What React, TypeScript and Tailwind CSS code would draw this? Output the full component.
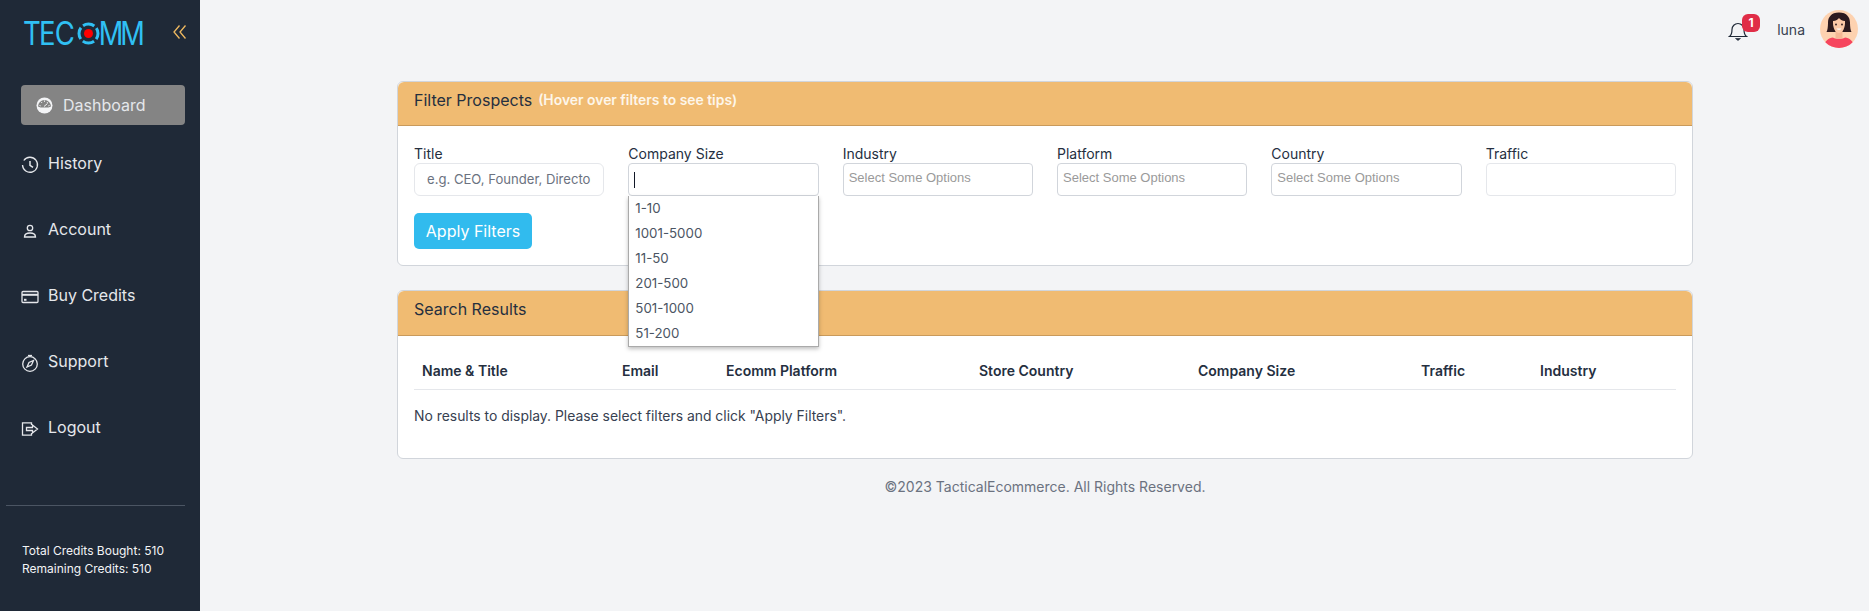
import React from "react";

const font = { fontFamily: "Inter, sans-serif" };

function Logo() {
  return (
    <svg width="124" height="40" viewBox="0 0 124 40" className="block">
      <g fill="#30c0f4" fontFamily="Inter, sans-serif" fontSize="32" fontWeight="400">
        <text x="0 18.600 37" y="31" transform="scale(0.86 1)">TEC</text>
        <text x="89 114.500" y="31" transform="scale(0.85 1)">MM</text>
      </g>
      <circle cx="65.500" cy="19.500" r="9.500" fill="none" stroke="#30c0f4" strokeWidth="3" strokeDasharray="12 2.900" strokeDashoffset="6" />
      <circle cx="65.500" cy="19.500" r="4.500" fill="#fe0000" />
    </svg>
  );
}

const I = ({ children }: { children: React.ReactNode }) => (
  <svg width="18" height="18" viewBox="0 0 18 18" fill="none" stroke="currentColor" strokeWidth="1.300">
    {children}
  </svg>
);

const nav: [string, React.ReactNode][] = [
  ["History", <I><path d="M2.800 4.500A7.500 7.500 0 1 1 1.500 9" /><path d="M9 5v4.300l3 2" strokeWidth="1.500" /></I>],
  ["Account", <I><circle cx="9" cy="6" r="2.700" /><path d="M3.500 15c0-3 2.200-4 5.500-4s5.500 1 5.500 4z" /></I>],
  ["Buy Credits", <I><rect x="1" y="3.500" width="16" height="11" rx="1" /><path d="M1 6.800h16" strokeWidth="2" /><path d="M3 11.800h2.500" strokeWidth="2" /></I>],
  ["Support", <I><circle cx="9" cy="10" r="7.300" /><path d="M12.500 6.500l-2 4.600-4.500 2 2-4.600z" /><path d="M7 1.500h4" /></I>],
  ["Logout", <I><path d="M10.500 5V2.800H1.500v12.400h9V13" /><path d="M5.500 7.500h6V5l5 4-5 4v-2.500h-6z" /></I>],
];

const colLabels: [string, string][] = [
  ["Name & Title", "w-[200px]"],
  ["Email", "w-[104px]"],
  ["Ecomm Platform", "w-[253px]"],
  ["Store Country", "w-[219px]"],
  ["Company Size", "w-[223px]"],
  ["Traffic", "w-[119px]"],
  ["Industry", "w-[100px]"],
];

function Multi({ label }: { label: string }) {
  return (
    <div>
      <div className="text-[14px] leading-[17px] text-[#252f3f]">{label}</div>
      <div className="mt-[1px] h-[33px] rounded-[4px] border border-[#d1d5db] bg-white pl-[5px] pt-[5px] text-[13px] leading-[17px] text-[#9a9a9a]" style={{ fontFamily: "'Liberation Sans', sans-serif" }}>
        Select Some Options
      </div>
    </div>
  );
}

export default function App() {
  return (
    <div className="flex h-[611px] w-full overflow-hidden bg-[#f3f4f6]" style={font}>
      <aside className="flex w-[200px] shrink-0 flex-col bg-[#1f2937] text-[#e5e7eb]">
        <div className="flex h-[85px] items-start pl-[23px] pt-[14px]">
          <Logo />
          <svg width="14" height="16" viewBox="0 0 14 16" fill="none" stroke="#efb960" strokeWidth="1.300" className="ml-[26px] mt-[10px]">
            <path d="M6.500 1.500L1 8l5.500 6.500M12.500 1.500L7 8l5.500 6.500" />
          </svg>
        </div>
        <div className="ml-[21px] mr-[15px] flex h-[40px] items-center rounded-[4px] bg-[#848484] pl-[15px] text-[16px] text-[#e5e7eb]">
          <svg width="17" height="17" viewBox="0 0 17 17" className="mr-[10px]">
            <circle cx="8.500" cy="8.500" r="8" fill="#f3f4f6" />
            <path d="M2 9.500a6.500 6.500 0 0 1 13 0l-2.500 1h-8z" fill="#848484" />
            <path d="M3.500 8.500l1.200.4M5.200 5l.8.9M8.500 3.500v1.300M11.800 5l-.8.9M8 9.500l3.500-3M13.500 8.500l-1.200.4" stroke="#f3f4f6" strokeWidth="1" fill="none" />
          </svg>
          Dashboard
        </div>
        <nav className="mt-[7px] flex flex-col">
          {nav.map(([label, icon]) => (
            <div key={label} className="flex h-[66px] items-center pl-[21px] text-[16px] text-[#e5e7eb]">
              <span className="mr-[9px] flex w-[18px] items-center">{icon}</span>
              <span className="-mt-[4px]">{label}</span>
            </div>
          ))}
        </nav>
        <div className="ml-[6px] mr-[15px] mt-[43px] border-t border-[#4b5563]" />
        <div className="mt-[36px] pl-[22px] text-[12px] leading-[18px] text-[#f3f4f6]">
          <div>Total Credits Bought: 510</div>
          <div>Remaining Credits: 510</div>
        </div>
      </aside>

      <main className="relative min-w-0 flex-1">
        <header className="flex h-[81px] items-start justify-end pr-[11px] pt-[10px]">
          <div className="relative mr-[29px] mt-[11px] h-[20px] w-[20px]">
            <svg width="20" height="20" viewBox="0 0 20 20" fill="none" stroke="#1f2937" strokeWidth="1.200">
              <path d="M1.500 15.500c2-1.500 2.500-3.500 2.500-7a6 6 0 0 1 12 0c0 3.500.5 5.500 2.500 7z" />
              <path d="M7.500 17.500h5l-2.500 2z" fill="#1f2937" strokeWidth="0.600" />
            </svg>
            <span className="absolute -right-[12px] -top-[7px] flex h-[18px] w-[18px] items-center justify-center rounded-[6px] bg-[#e02d47] text-[12px] font-bold leading-none text-white">1</span>
          </div>
          <span className="mr-[15px] mt-[11px] text-[14px] leading-[17px] text-[#374151]">luna</span>
          <svg width="38" height="38" viewBox="0 0 38 38">
            <defs>
              <clipPath id="av"><circle cx="19" cy="19" r="19" /></clipPath>
            </defs>
            <g clipPath="url(#av)">
              <rect width="38" height="38" fill="#fdd2b0" />
              <path d="M19 2.500c-8 0-11 5-11 10 0 4-.5 8-1.500 9.500h25c-1-1.500-1.500-5.500-1.500-9.500 0-5-3-10-11-10z" fill="#2d1a1f" />
              <path d="M15.500 20h7v8h-7z" fill="#f4b795" />
              <path d="M4 38c0-7 5-10.500 9-10.500 1 1.800 11 1.800 12 0 4 0 9 3.500 9 10.500z" fill="#f6455e" />
              <path d="M13 11c3 0 5-1.500 6-3 1 1.500 3 3 6 3 .5 7-2.500 12-6 12s-6.500-5-6-12z" fill="#fcc9a8" />
              <circle cx="16" cy="14.500" r="0.900" fill="#2d1a1f" />
              <circle cx="22" cy="14.500" r="0.900" fill="#2d1a1f" />
              <path d="M16.500 18.500h5c-.5 1.800-4.500 1.800-5 0z" fill="#fff" />
            </g>
          </svg>
        </header>

        <div className="ml-[197px] mr-[176px]">
          <section className="rounded-[6px] border border-[#d1d5db] bg-white">
            <div className="flex h-[44px] items-start rounded-t-[6px] border-b border-[#c99a5b] bg-[#f0bb72] px-[16px] pt-[7px] text-[#252f3f]">
              <span className="text-[16px] leading-[22px]">Filter Prospects</span>
              <span className="ml-[6px] text-[13.900px] font-semibold leading-[22px] text-[#fdf6ea]">(Hover over filters to see tips)</span>
            </div>
            <div className="px-[16px] pb-[16px] pt-[19px]">
              <div className="grid grid-cols-6 gap-x-[24px]">
                <div>
                  <div className="text-[14px] leading-[17px] text-[#252f3f]">Title</div>
                  <div className="mt-[1px] h-[33px] rounded-[6px] border border-[#e5e7eb] bg-white px-[12px]">
                    <div className="overflow-hidden whitespace-nowrap text-[13.100px] leading-[31px] text-[#6b7280]">e.g. CEO, Founder, Director</div>
                  </div>
                </div>
                <div className="relative">
                  <div className="text-[14px] leading-[17px] text-[#252f3f]">Company Size</div>
                  <div className="mt-[1px] flex h-[33px] items-center rounded-[4px] border border-[#d1d5db] bg-white pl-[5px]">
                    <span className="h-[16px] w-[1px] bg-[#111827]" />
                  </div>
                  <ul className="absolute left-0 right-0 top-[51px] z-10 border border-t-0 border-[#aaaaaa] bg-white text-[13.300px] text-[#4b5563] shadow-[0_2px_4px_rgba(0,0,0,0.25)]">
                    {["1-10", "1001-5000", "11-50", "201-500", "501-1000", "51-200"].map((o) => (
                      <li key={o} className="flex h-[25px] items-center pl-[6px]">{o}</li>
                    ))}
                  </ul>
                </div>
                <Multi label="Industry" />
                <Multi label="Platform" />
                <Multi label="Country" />
                <div>
                  <div className="text-[14px] leading-[17px] text-[#252f3f]">Traffic</div>
                  <div className="mt-[1px] h-[33px] rounded-[4px] border border-[#e5e7eb] bg-white" />
                </div>
              </div>
              <button className="mt-[17px] block h-[36px] w-[118px] rounded-[5px] bg-[#31bbee] text-[16px] text-white">Apply Filters</button>
            </div>
          </section>

          <section className="mt-[24px] rounded-[6px] border border-[#d1d5db] bg-white">
            <div className="flex h-[45px] items-start rounded-t-[6px] border-b border-[#c99a5b] bg-[#f0bb72] px-[16px] pt-[7px] text-[16px] leading-[22px] text-[#252f3f]">
              Search Results
            </div>
            <div className="px-[16px] pb-[33px] pt-[26px]">
              <div className="flex h-[28px] border-b border-[#e5e7eb] pl-[8px] text-[14px] font-semibold leading-[17px] text-[#252f3f]">
                {colLabels.map(([l, w]) => (
                  <div key={l} className={w}>{l}</div>
                ))}
              </div>
              <p className="mt-[18px] text-[13.900px] leading-[17px] text-[#374151]">No results to display. Please select filters and click "Apply Filters".</p>
            </div>
          </section>

          <p className="mt-[19px] text-center text-[14px] leading-[17px] text-[#6b7280]">©2023 TacticalEcommerce. All Rights Reserved.</p>
        </div>
      </main>
    </div>
  );
}
